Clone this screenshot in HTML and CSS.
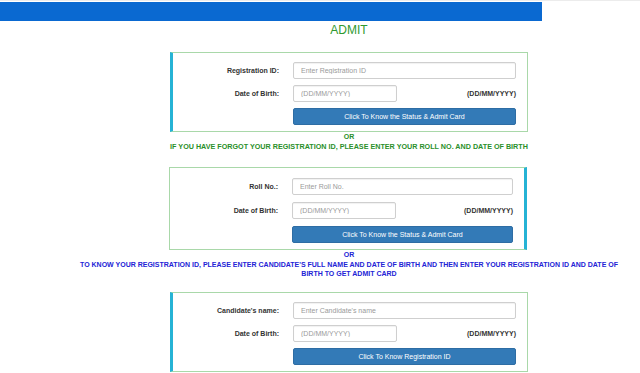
FILE: index.html
```html
<!DOCTYPE html>
<html>
<head>
<meta charset="utf-8">
<title>Admit</title>
<link rel="stylesheet" href="styles.css">
</head>
<body>
<div class="topline"><div class="bar"></div></div>
<div class="page">
  <h1 class="title">ADMIT</h1>

  <form class="card card-left">
    <label class="lbl">Registration ID:</label>
    <input class="inp" type="text" placeholder="Enter Registration ID">
    <label class="lbl">Date of Birth:</label>
    <div class="dob-row">
      <input class="inp inp-date" type="text" placeholder="(DD/MM/YYYY)">
      <span class="fmt">(DD/MM/YYYY)</span>
    </div>
    <span></span>
    <button class="btn" type="button">Click To Know the Status &amp; Admit Card</button>
  </form>

  <p class="or green">OR</p>
  <p class="note green wide">IF YOU HAVE FORGOT YOUR REGISTRATION ID, PLEASE ENTER YOUR ROLL NO. AND DATE OF BIRTH</p>

  <form class="card card-right">
    <label class="lbl">Roll No.:</label>
    <input class="inp" type="text" placeholder="Enter Roll No.">
    <label class="lbl">Date of Birth:</label>
    <div class="dob-row">
      <input class="inp inp-date" type="text" placeholder="(DD/MM/YYYY)">
      <span class="fmt">(DD/MM/YYYY)</span>
    </div>
    <span></span>
    <button class="btn" type="button">Click To Know the Status &amp; Admit Card</button>
  </form>

  <p class="or blue">OR</p>
  <p class="note blue wrap">TO KNOW YOUR REGISTRATION ID, PLEASE ENTER CANDIDATE'S FULL NAME AND DATE OF BIRTH AND THEN ENTER YOUR REGISTRATION ID AND DATE OF BIRTH TO GET ADMIT CARD</p>

  <form class="card card-left card-last">
    <label class="lbl">Candidate's name:</label>
    <input class="inp" type="text" placeholder="Enter Candidate's name">
    <label class="lbl">Date of Birth:</label>
    <div class="dob-row">
      <input class="inp inp-date" type="text" placeholder="(DD/MM/YYYY)">
      <span class="fmt">(DD/MM/YYYY)</span>
    </div>
    <span></span>
    <button class="btn" type="button">Click To Know Registration ID</button>
  </form>
</div>
</body>
</html>
```
FILE: styles.css
```css
html, body {
  margin: 0;
  padding: 0;
  background: #ffffff;
  overflow: hidden;
}
body {
  font-family: "Liberation Sans", Arial, sans-serif;
  color: #333333;
}
.topline {
  border-top: 1px solid #ececec;
  padding-top: 1px;
}
.bar {
  width: 542px;
  height: 19px;
  background: #0a69d1;
}
.page {
  padding-left: 58px;
}
.title {
  margin: 2px 0 0;
  text-align: center;
  font-size: 12px;
  line-height: 14px;
  font-weight: normal;
  color: #2f9a2f;
}
.card {
  box-sizing: border-box;
  width: 358px;
  margin: 15px auto 0;
  border: 1px solid #a9d8a9;
  display: grid;
  grid-template-columns: 106px 1fr;
  column-gap: 14px;
  row-gap: 6px;
  align-items: center;
}
.card-left {
  border-left: 3px solid #26b3d5;
  padding: 9px 11px 6px 0;
}
.card-right {
  border-right: 3px solid #26b3d5;
  padding: 10px 11px 6px 0;
  grid-template-columns: 108px 1fr;
  row-gap: 7px;
  position: relative;
  left: -1px;
}
.card-last {
  margin-top: 14px;
}
.lbl {
  text-align: right;
  font-size: 7px;
  font-weight: bold;
  color: #333333;
}
.inp {
  box-sizing: border-box;
  height: 17px;
  width: 100%;
  margin: 0;
  padding: 0 7px;
  border: 1px solid #cfcfcf;
  border-radius: 2px;
  box-shadow: inset 0 1px 1px rgba(0,0,0,0.06);
  font-family: "Liberation Sans", Arial, sans-serif;
  font-size: 7px;
  color: #555555;
  background: #ffffff;
}
.inp::placeholder {
  color: #9a9a9a;
}
.dob-row {
  display: flex;
  align-items: center;
  justify-content: space-between;
}
.inp-date {
  width: 104px;
}
.fmt {
  font-size: 7px;
  font-weight: bold;
  color: #333333;
}
.btn {
  box-sizing: border-box;
  height: 17px;
  width: 100%;
  margin: 0;
  padding: 0;
  border: 1px solid #2e6da4;
  border-radius: 2px;
  background: #337ab7;
  color: #ffffff;
  font-family: "Liberation Sans", Arial, sans-serif;
  font-size: 7px;
}
.or {
  margin: 0;
  text-align: center;
  font-size: 7px;
  font-weight: bold;
  line-height: 10px;
}
.note {
  margin: 0 auto;
  text-align: center;
  font-size: 7px;
  font-weight: bold;
  line-height: 10px;
}
.wide {
  font-size: 7.2px;
}
.wrap {
  max-width: 545px;
  line-height: 9px;
}
.green {
  color: #2a8f2a;
}
.blue {
  color: #2323d6;
}
```
